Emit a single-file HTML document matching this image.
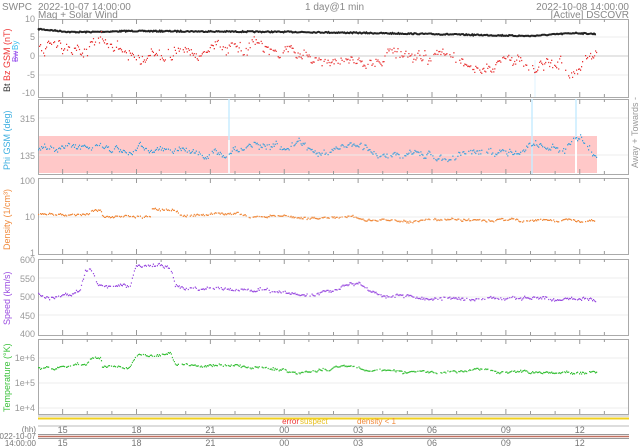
<!DOCTYPE html><html><head><meta charset="utf-8"><style>
html,body{margin:0;padding:0;background:#fff;width:640px;height:448px;overflow:hidden}
svg{display:block;font-family:"Liberation Sans","DejaVu Sans",sans-serif}
</style></head><body>
<svg id="s" width="640" height="448" xmlns="http://www.w3.org/2000/svg">
<g font-size="10" fill="#888">
<text x="2" y="10">SWPC</text>
<text x="38" y="10">2022-10-07 14:00:00</text>
<text x="38" y="18">Mag + Solar Wind</text>
<text x="305" y="10">1 day@1 min</text>
<text x="629" y="10" text-anchor="end">2022-10-08 14:00:00</text>
<text x="629" y="18" text-anchor="end">[Active] DSCOVR</text>
</g>
<g id="frames"></g>
<g id="data"></g>
<g font-size="9" fill="#999" text-anchor="end">
<text x="35" y="22">10</text><text x="35" y="40">5</text><text x="35" y="59">0</text><text x="35" y="78">-5</text><text x="35" y="96">-10</text>
<text x="35" y="122">315</text><text x="35" y="159">135</text>
<text x="35" y="184">100</text><text x="35" y="220">10</text><text x="35" y="256">1</text>
<text x="35" y="263">600</text><text x="35" y="282">550</text><text x="35" y="300">500</text><text x="35" y="319">450</text><text x="35" y="337">400</text>
<text x="35" y="361">1e+6</text><text x="35" y="386">1e+5</text><text x="35" y="411">1e+4</text>
</g>
<g font-size="9">
<text transform="translate(10,92) rotate(-90)"><tspan fill="#333">Bt </tspan><tspan fill="#e33">  Bz GSM (nT)</tspan></text>
<text transform="translate(18,62) rotate(-90)" fill="#9955ee" font-size="8" text-decoration="line-through">Bw</text>
<text transform="translate(18,50) rotate(-90)" fill="#33bbee" font-size="8">By</text>
<text transform="translate(10,170) rotate(-90)" fill="#3aaee0">Phi GSM (deg)</text>
<text transform="translate(10,250) rotate(-90)" fill="#f08a3c">Density (1/cm³)</text>
<text transform="translate(10,325) rotate(-90)" fill="#9a4de0">Speed (km/s)</text>
<text transform="translate(10,412) rotate(-90)" fill="#3bc13b">Temperature (°K)</text>
<text transform="translate(638,168) rotate(-90)" fill="#999">Away +  Towards -</text>
</g>
<g font-size="8" text-anchor="middle">
<text x="299" y="424" fill="#e33" text-anchor="end">error</text><text x="300" y="424" fill="#e8c020" text-anchor="start">suspect</text>
<text x="357" y="424" fill="#f08a3c" text-anchor="start">density &lt; 1</text>
</g>
<g font-size="9" fill="#777" text-anchor="middle" id="tl"></g>
<g font-size="8" fill="#777" text-anchor="end">
<text x="36" y="432">(hh)</text><text x="36" y="439">2022-10-07</text><text x="36" y="446">14:00:00</text>
</g>
</svg>
<script>
var NS="http://www.w3.org/2000/svg",s=document.getElementById('s');
function el(p,t,a){var e=document.createElementNS(NS,t);for(var k in a)e.setAttribute(k,a[k]);p.appendChild(e);return e}
var F=document.getElementById('frames'),D=document.getElementById('data'),TL=document.getElementById('tl');
var X0=38,X1=629,W=X1-X0;
var P=[[19,97],[99,174],[178,254],[259,335],[339,414]];
el(F,'rect',{x:X0,y:136,width:559,height:37,fill:'#ffc8c8'});
[[37,56,75],[118,155],[217],[278,297,315],[358,383,408]].forEach(function(g){g.forEach(function(y){el(F,'line',{x1:X0,x2:X1,y1:y,y2:y,stroke:'#ececec','stroke-width':1})})});
el(F,'line',{x1:X0,x2:X1,y1:56,y2:56,stroke:'#ccc'});
P.forEach(function(p){el(F,'rect',{x:X0+.5,y:p[0]+.5,width:W-1,height:p[1]-p[0],fill:'none',stroke:'#aaa'});
 for(var h=1;h<24;h++){var x=X0+h*W/24;el(F,'line',{x1:x,x2:x,y1:p[0],y2:p[0]+(h%3==1?5:3),stroke:'#999'});el(F,'line',{x1:x,x2:x,y1:p[1],y2:p[1]-(h%3==1?5:3),stroke:'#999'});}});
el(F,'line',{x1:X0,x2:X1,y1:416,y2:416,stroke:'#bbb'});
el(F,'line',{x1:X0,x2:X1,y1:418.5,y2:418.5,stroke:'#f0d020','stroke-width':2});
el(F,'line',{x1:X0,x2:X1,y1:426,y2:426,stroke:'#bbb'});
el(F,'line',{x1:X0,x2:X1,y1:434.5,y2:434.5,stroke:'#999'});
el(F,'line',{x1:X0,x2:X1,y1:436.5,y2:436.5,stroke:'#c07060','stroke-width':1.5});
el(F,'line',{x1:X0,x2:X1,y1:438.5,y2:438.5,stroke:'#999'});
['15','18','21','00','03','06','09','12'].forEach(function(t,i){var x=X0+(1+3*i)*W/24;
 var a=el(TL,'text',{x:x,y:433});a.textContent=t;var b=el(TL,'text',{x:x,y:446});b.textContent=t;});
[[229,99,174],[532,99,174],[576,99,174]].forEach(function(c){el(F,'line',{x1:c[0],x2:c[0],y1:c[1],y2:c[2],stroke:'#c8ecff','stroke-width':1.5})});
el(F,'line',{x1:535,x2:535,y1:60,y2:97,stroke:'#dff3ff','stroke-width':1});
el(F,'line',{x1:576,x2:576,y1:140,y2:174,stroke:'#fff','stroke-width':2});
el(F,'line',{x1:229,x2:229,y1:140,y2:174,stroke:'#fff','stroke-width':1.5});
var seed=7;function r(){seed=(seed*16807)%2147483647;return seed/2147483647}
var N=560;
function lerp(pts,t){for(var i=1;i<pts.length;i++)if(t<=pts[i][0]){var a=pts[i-1],b=pts[i];return a[1]+(b[1]-a[1])*(t-a[0])/(b[0]-a[0])}return pts[pts.length-1][1]}
function series(pts,col,noise,walk,sp){var w=0,d='';for(var i=0;i<N;i++){var x=X0+i*559/N;w=w*0.9+(r()-.5)*walk;var y=lerp(pts,x)+w+(r()-.5)*noise;if(r()<sp)y+=(r()-.5)*sp*200;
 if(r()<0.15)continue;d+='M'+x.toFixed(1)+' '+y.toFixed(1)+'h1.2';}el(D,'path',{d:d,stroke:col,'stroke-width':1.3,fill:'none'})}
var d='';for(var i=0;i<N;i++){var x=X0+i*559/N;var y=lerp([[38,29],[70,32],[90,32],[130,31],[300,32],[430,34],[530,36],[575,33],[597,34]],x)+(r()-.5)*1.2;d+=(i?'L':'M')+x.toFixed(1)+' '+y.toFixed(1);}
el(D,'path',{d:d,stroke:'#222','stroke-width':2,fill:'none'});
series([[38,44],[80,48],[95,38],[110,40],[140,60],[180,46],[250,48],[290,50],[320,54],[380,60],[420,55],[470,62],[530,64],[570,66],[597,50]],'#e83030',6,7,0.06);
series([[38,150],[100,148],[160,152],[240,150],[300,145],[360,153],[420,156],[470,152],[530,148],[560,150],[580,140],[597,158]],'#3a9fdc',3,5,0.04);
series([[38,215],[88,214],[90,211],[100,211],[102,217],[150,217],[152,209],[175,210],[180,216],[210,214],[300,218],[345,218],[380,221],[597,220]],'#f08a3c',1.5,1.5,0.01);
series([[38,295],[50,298],[60,295],[80,290],[85,270],[92,270],[98,285],[130,286],[136,265],[170,268],[175,288],[200,290],[260,291],[300,295],[330,291],[345,285],[360,283],[380,297],[597,299]],'#9a4de0',2,2,0.02);
series([[38,368],[60,368],[85,364],[92,356],[100,356],[102,366],[130,368],[136,355],[170,355],[175,367],[200,364],[260,368],[300,371],[330,370],[345,366],[375,372],[597,372]],'#3bc13b',1.5,1.5,0.02);
</script>
</body></html>
